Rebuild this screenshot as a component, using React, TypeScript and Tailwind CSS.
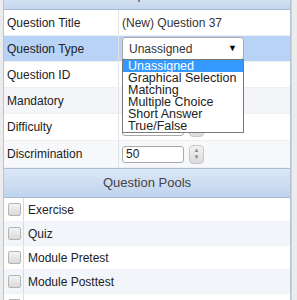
import React from "react";

// linhas da tabela de propriedades
const propRows = [
  { label: "Question Title", bg: "bg-white", h: "h-[26px]" },
  { label: "Question Type", bg: "bg-[#b8d3f6]", h: "h-[26px]" },
  { label: "Question ID", bg: "bg-white", h: "h-[26px]" },
  { label: "Mandatory", bg: "bg-[#f3f5f9]", h: "h-[26px]" },
  { label: "Difficulty", bg: "bg-white", h: "h-[27px]" },
  { label: "Discrimination", bg: "bg-[#f7f8fa]", h: "h-[27px]" },
];

const questionTypes = [
  "Unassigned",
  "Graphical Selection",
  "Matching",
  "Multiple Choice",
  "Short Answer",
  "True/False",
];

const pools = ["Exercise", "Quiz", "Module Pretest", "Module Posttest", "Final Exam"];

function NumberInput({ value }: { value: string }) {
  return (
    <div className="flex items-center gap-[5px]">
      <div className="w-[62px] h-[17px] border border-[#a9a9a9] rounded-[3px] bg-white pl-[3px] leading-[15px] text-[12px]">
        {value}
      </div>
      <div className="w-[15px] h-[19px] rounded-[4px] border border-[#c8c8c8] bg-gradient-to-b from-[#f2f2f2] to-[#dcdcdc] flex flex-col items-center justify-center text-[#8a8a8a] text-[6px] leading-[7px]">
        <span>▲</span>
        <span>▼</span>
      </div>
    </div>
  );
}

function Checkbox() {
  return (
    <div className="w-[13px] h-[13px] rounded-[2px] border border-[#b4b4b4] bg-gradient-to-b from-[#f4f4f4] to-[#d9d9d9]" />
  );
}

function PropValue({ label }: { label: string }) {
  if (label === "Question Title") {
    return <span className="text-[12px] text-[#333]">(New) Question 37</span>;
  }
  if (label === "Question Type") {
    return (
      <div className="relative w-[122px]">
        <div className="h-[23px] w-[122px] border border-[#a9a9a9] rounded-[3px] bg-white flex items-center justify-between pl-[6px] pr-[6px] text-[12px] text-[#333]">
          <span>Unassigned</span>
          <span className="text-[9px] text-black">▼</span>
        </div>
        {/* lista aberta do select */}
        <div className="absolute left-0 top-[22px] w-[122px] z-10 border border-[#7a7a7a] bg-white text-[12.5px] leading-[12px]">
          {questionTypes.map((t, i) => (
            <div
              key={t}
              className={`pl-[5px] h-[12px] ${i === 0 ? "bg-[#3399ff] text-white" : "text-[#222]"}`}
            >
              {t}
            </div>
          ))}
        </div>
      </div>
    );
  }
  if (label === "Mandatory") {
    return <Checkbox />;
  }
  if (label === "Difficulty") {
    return <NumberInput value="0" />;
  }
  if (label === "Discrimination") {
    return <NumberInput value="50" />;
  }
  return null;
}

export default function App() {
  return (
    <div className="w-[297px] h-[300px] overflow-hidden bg-[#ececec] flex font-['Liberation_Sans',Arial,sans-serif] text-[12px] text-[#222]">
      <div className="ml-[3px] w-[288px] border-l border-r border-[#b7c4d3] bg-white flex flex-col shrink-0">
        {/* cabeçalho cortado no topo */}
        <div className="h-[10px] shrink-0 overflow-hidden border-b border-[#a9bdd8] bg-gradient-to-b from-[#d3e1f3] to-[#c3d6ee] text-center">
          <div className="-mt-[13px] leading-[15px] text-[13px] text-[#444]">Properties</div>
        </div>

        {propRows.map((r) => (
          <div key={r.label} className={`flex shrink-0 ${r.h} ${r.bg} border-b border-[#eceff4]`}>
            <div className="w-[115px] pl-[3px] flex items-center border-r border-[#dfe3e8]">{r.label}</div>
            <div className="flex-1 pl-[3px] flex items-center">
              <PropValue label={r.label} />
            </div>
          </div>
        ))}

        <div className="h-[30px] shrink-0 flex items-center justify-center border-t border-b border-[#a9bdd8] bg-gradient-to-b from-[#dce7f6] to-[#bfd3ee] text-[13px] text-[#444]">
          Question Pools
        </div>

        {pools.map((p, i) => (
          <div
            key={p}
            className={`flex h-[24px] shrink-0 ${i % 2 === 1 ? "bg-[#f2f5fa]" : "bg-white"} border-b border-[#eef1f5]`}
          >
            <div className="w-[20px] flex items-center pl-[4px] border-r border-[#d6dbe2]">
              <Checkbox />
            </div>
            <div className="flex-1 pl-[4px] flex items-center">{p}</div>
          </div>
        ))}
      </div>
      <div className="flex-1 border-l border-[#d0d0d0] bg-[#ececec]" />
    </div>
  );
}
